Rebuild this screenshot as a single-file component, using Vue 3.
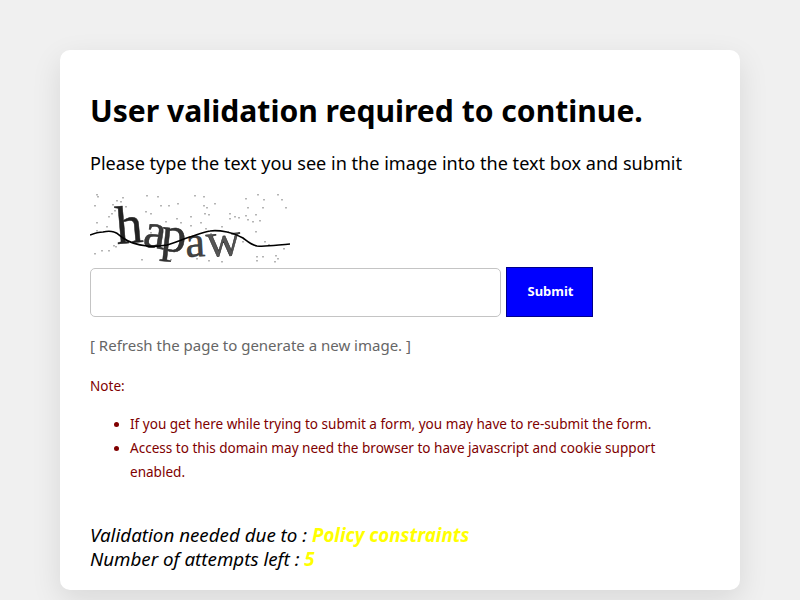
<script setup>
const noise = [
  [96,194],[97,196],[122,197],[146,195],[157,196],[194,195],[203,196],[214,203],[257,194],[277,194],
  [116,200],[120,201],[112,204],[94,205],[125,206],[160,205],[168,205],[177,203],[203,205],[206,207],
  [245,198],[263,199],[281,199],[247,207],[262,207],[285,207],[114,210],[111,213],[145,211],[150,213],
  [204,213],[208,214],[229,213],[234,216],[238,217],[247,219],[252,221],[255,214],[259,220],[229,218],
  [245,215],[176,218],[190,216],[180,222],[165,221],[200,222],[96,222],[108,216],[106,226],[96,230],
  [113,245],[115,246],[101,250],[108,250],[94,253],[141,259],[170,259],[196,258],[208,260],[221,261],
  [256,256],[262,256],[275,255],[277,258],[256,260],[274,261],[283,248],[242,241],[238,232],[255,231],
  [264,241],[268,244],[150,232],[190,225],[205,228],[210,233],[178,249],[221,226],[227,231]
]
</script>

<template>
  <main class="page">
    <section class="card">
      <h1 class="title">User validation required to continue.</h1>
      <p class="lead">Please type the text you see in the image into the text box and submit</p>
      <svg class="captcha" width="200" height="70" viewBox="90 193 200 70" role="img" aria-label="captcha">
        <rect v-for="(n, i) in noise" :key="i" :x="n[0]" :y="n[1]" width="2" height="1.5" fill="#b5b5b5" />
        <g class="letters" fill="#222">
          <text x="117" y="244" font-size="54" transform="rotate(-5 117 244)">h</text>
          <text x="142" y="246" font-size="50" fill="#3a3a3a" transform="rotate(9 142 246)">a</text>
          <text x="160" y="250" font-size="50" fill="#333" transform="rotate(6 160 250)">p</text>
          <text x="186" y="257" font-size="44" fill="#444" transform="rotate(-3 186 257)">a</text>
          <text x="207" y="257" font-size="48" fill="#555" transform="rotate(-4 207 257)">w</text>
        </g>
        <path class="wave" d="M90 235 C95 233 99 232 103 232 C107 231 111 231 114 232 C118 233 120 236 123 238 C130 243 138 245 147 246 C154 247 161 246 167 245 C175 243 183 239 190 237 C197 235 203 232 210 231 C216 230 222 231 227 232 C233 233 238 235 243 238 C247 241 251 245 257 246 C266 247 277 245 290 244" />
      </svg>
      <form class="entry" @submit.prevent>
        <input class="field" type="text" aria-label="Captcha text" />
        <button class="submit" type="submit">Submit</button>
      </form>
      <p class="refresh">[ Refresh the page to generate a new image. ]</p>
      <div class="note">
        <p class="note-label">Note:</p>
        <ul class="note-list">
          <li>If you get here while trying to submit a form, you may have to re-submit the form.</li>
          <li>Access to this domain may need the browser to have javascript and cookie support enabled.</li>
        </ul>
      </div>
      <div class="status">
        <div>Validation needed due to : <b>Policy constraints</b></div>
        <div>Number of attempts left : <b>5</b></div>
      </div>
    </section>
  </main>
</template>

<style>
html, body { margin: 0; background: #f0f0f0; }
</style>

<style scoped>
.page {
  height: 600px;
  overflow: hidden;
  padding-top: 50px;
  box-sizing: border-box;
  font-family: "Noto Sans", "Open Sans", sans-serif;
  color: #000;
}
.card {
  width: 680px;
  height: 540px;
  box-sizing: border-box;
  margin: 0 auto;
  padding: 30px;
  background: #fff;
  border-radius: 10px;
  box-shadow: 0 10px 30px rgba(0, 0, 0, 0.1);
}
.title { margin: 12px 0 0; font-size: 30.1px; line-height: 38px; font-weight: 700; }
.lead { margin: 21px 0 0; font-size: 18.1px; line-height: 24px; }
.captcha { display: block; margin-top: 18px; }
.letters text { font-family: "Liberation Serif", serif; font-weight: 400; stroke: #222; stroke-width: 0.5; }
.wave { fill: none; stroke: #000; stroke-width: 1.6; }
.entry { display: flex; align-items: center; gap: 5px; margin-top: 4px; }
.field {
  width: 411px;
  height: 49px;
  box-sizing: border-box;
  border: 1px solid #c4c4c4;
  border-radius: 5px;
  background: #fff;
}
.submit {
  width: 87px;
  height: 50px;
  border: 1px solid #00008b;
  background: #00f;
  color: #fff;
  font: 700 13px "Noto Sans", sans-serif;
  padding: 0 0 2px 2px;
}
.refresh { margin: 16.5px 0 0; font-size: 15px; line-height: 22px; color: #666; }
.note { color: #800000; font-size: 13.55px; }
.note-label { margin: 20.5px 0 0; line-height: 20px; }
.note-list { margin: 16px 0 0; padding-left: 40px; }
.note-list li { line-height: 24px; }
.status { margin-top: 39px; font-size: 18.75px; line-height: 24px; font-style: italic; }
.status b { color: #ff0; }
</style>
